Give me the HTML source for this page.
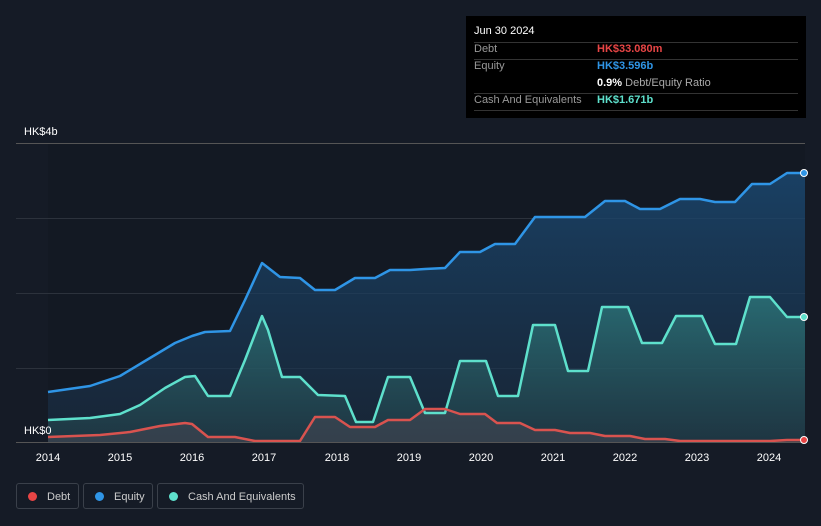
<!DOCTYPE html>
<html><head><style>
body{margin:0;background:#151b26;width:821px;height:526px;overflow:hidden;font-family:"Liberation Sans",sans-serif;position:relative}
.tip{position:absolute;left:466px;top:16px;width:340px;height:102px;background:#000;color:#fff;font-size:11px}
.row{position:absolute;left:8px;width:324px;border-top:1px solid #333}
.l{position:absolute;left:8px;color:#999}
.v{position:absolute;left:131px;font-weight:bold;white-space:nowrap}
.lab{position:absolute;color:#fff;font-size:11px}
.leg{position:absolute;top:483px;height:26px;border:1px solid #3a404a;border-radius:3px;color:#ccc;font-size:11px;line-height:26px;box-sizing:border-box;white-space:nowrap}
.leg i{display:inline-block;width:9px;height:9px;border-radius:50%;margin:0 10px 0 11px;vertical-align:-1px}
</style></head><body>
<div class="tip">
<div style="position:absolute;left:8px;top:9px;font-size:11px">Jun 30 2024</div>
<div class="row" style="top:26px"></div>
<div class="l" style="top:27px">Debt</div><div class="v" style="top:27px;color:#e84545">HK$33.080m</div>
<div class="row" style="top:43px"></div>
<div class="l" style="top:44px">Equity</div><div class="v" style="top:44px;color:#2f95e6">HK$3.596b</div>
<div class="v" style="top:61px;color:#fff">0.9% <span style="color:#aaa;font-weight:normal">Debt/Equity Ratio</span></div>
<div class="row" style="top:77px"></div>
<div class="l" style="top:78px">Cash And Equivalents</div><div class="v" style="top:78px;color:#5ee0cc">HK$1.671b</div>
<div class="row" style="top:94px"></div>
</div>
<svg width="821" height="526" style="position:absolute;left:0;top:0">
<defs>
<linearGradient id="ge" x1="0" y1="0" x2="0" y2="1"><stop offset="0" stop-color="#1b4a74" stop-opacity=".8"/><stop offset="1" stop-color="#1a2d42" stop-opacity=".6"/></linearGradient>
<linearGradient id="gc" x1="0" y1="0" x2="0" y2="1"><stop offset="0" stop-color="#2f8080" stop-opacity=".7"/><stop offset="1" stop-color="#23404a" stop-opacity=".6"/></linearGradient>
</defs>
<rect x="48" y="143" width="757" height="300" fill="#12171f" opacity=".5"/>
<g stroke="#2c323c" stroke-width="1">
<line x1="16" y1="143.5" x2="805" y2="143.5" stroke="#555"/><line x1="16" y1="218.5" x2="805" y2="218.5"/><line x1="16" y1="293.5" x2="805" y2="293.5"/><line x1="16" y1="368.5" x2="805" y2="368.5"/></g>
<path fill="url(#ge)" d="M48,392 L90,386 120,376 150,358 175,343 192,336 205,332 230,331 245,300 262,263 280,277 300,278 315,290 335,290 355,278 375,278 390,270 410,270 425,269 445,268 460,252 480,252 495,244 515,244 535,217 555,217 585,217 605,201 625,201 640,209 660,209 680,199 700,199 715,202 735,202 752,184 770,184 787,173 805,173 L805,442 48,442Z"/>
<path fill="url(#gc)" d="M48,420 L90,418 120,414 140,405 165,388 185,377 195,376 208,396 230,396 245,360 262,316 268,330 282,377 300,377 318,395 345,396 356,422 373,422 388,377 410,377 425,413 445,413 460,361 486,361 498,396 518,396 533,325 555,325 568,371 588,371 602,307 628,307 642,343 662,343 676,316 702,316 715,344 736,344 750,297 770,297 787,317 805,317 L805,442 48,442Z"/>
<path fill="#4a4a55" fill-opacity=".5" d="M48,437 L100,435 130,432 160,426 185,423 192,424 208,437 235,437 255,441 300,441 315,417 335,417 350,427 375,427 388,420 410,420 425,409 445,409 460,414 485,414 497,423 520,423 535,430 555,430 570,433 590,433 605,436 630,436 645,439 665,439 680,441 770,441 787,440 805,440 L805,442 48,442Z"/>
<g fill="none" stroke-width="2.5" stroke-linejoin="round">
<path stroke="#2f95e6" d="M48,392 L90,386 120,376 150,358 175,343 192,336 205,332 230,331 245,300 262,263 280,277 300,278 315,290 335,290 355,278 375,278 390,270 410,270 425,269 445,268 460,252 480,252 495,244 515,244 535,217 555,217 585,217 605,201 625,201 640,209 660,209 680,199 700,199 715,202 735,202 752,184 770,184 787,173 805,173"/>
<path stroke="#5ee0cc" d="M48,420 L90,418 120,414 140,405 165,388 185,377 195,376 208,396 230,396 245,360 262,316 268,330 282,377 300,377 318,395 345,396 356,422 373,422 388,377 410,377 425,413 445,413 460,361 486,361 498,396 518,396 533,325 555,325 568,371 588,371 602,307 628,307 642,343 662,343 676,316 702,316 715,344 736,344 750,297 770,297 787,317 805,317"/>
<path stroke="#d9534f" d="M48,437 L100,435 130,432 160,426 185,423 192,424 208,437 235,437 255,441 300,441 315,417 335,417 350,427 375,427 388,420 410,420 425,409 445,409 460,414 485,414 497,423 520,423 535,430 555,430 570,433 590,433 605,436 630,436 645,439 665,439 680,441 770,441 787,440 805,440"/>
</g>
<line x1="16" y1="442.5" x2="805" y2="442.5" stroke="#555"/>
<circle cx="804" cy="173" r="3.5" fill="#2f95e6" stroke="#fff" stroke-width="1"/>
<circle cx="804" cy="317" r="3.5" fill="#5ee0cc" stroke="#fff" stroke-width="1"/>
<circle cx="804" cy="440" r="3.5" fill="#e84545" stroke="#fff" stroke-width="1"/>
<g fill="#fff" font-size="11" text-anchor="middle" font-family="Liberation Sans">
<text x="48" y="461">2014</text><text x="120" y="461">2015</text><text x="192" y="461">2016</text><text x="264" y="461">2017</text><text x="337" y="461">2018</text><text x="409" y="461">2019</text><text x="481" y="461">2020</text><text x="553" y="461">2021</text><text x="625" y="461">2022</text><text x="697" y="461">2023</text><text x="769" y="461">2024</text></g>
</svg>
<div class="lab" style="left:24px;top:126px">HK$4b</div>
<div class="lab" style="left:24px;top:425px">HK$0</div>
<div class="leg" style="left:16px;width:63px"><i style="background:#e84545"></i>Debt</div>
<div class="leg" style="left:83px;width:70px"><i style="background:#2f95e6"></i>Equity</div>
<div class="leg" style="left:157px;width:147px"><i style="background:#5ee0cc"></i>Cash And Equivalents</div>
</body></html>
